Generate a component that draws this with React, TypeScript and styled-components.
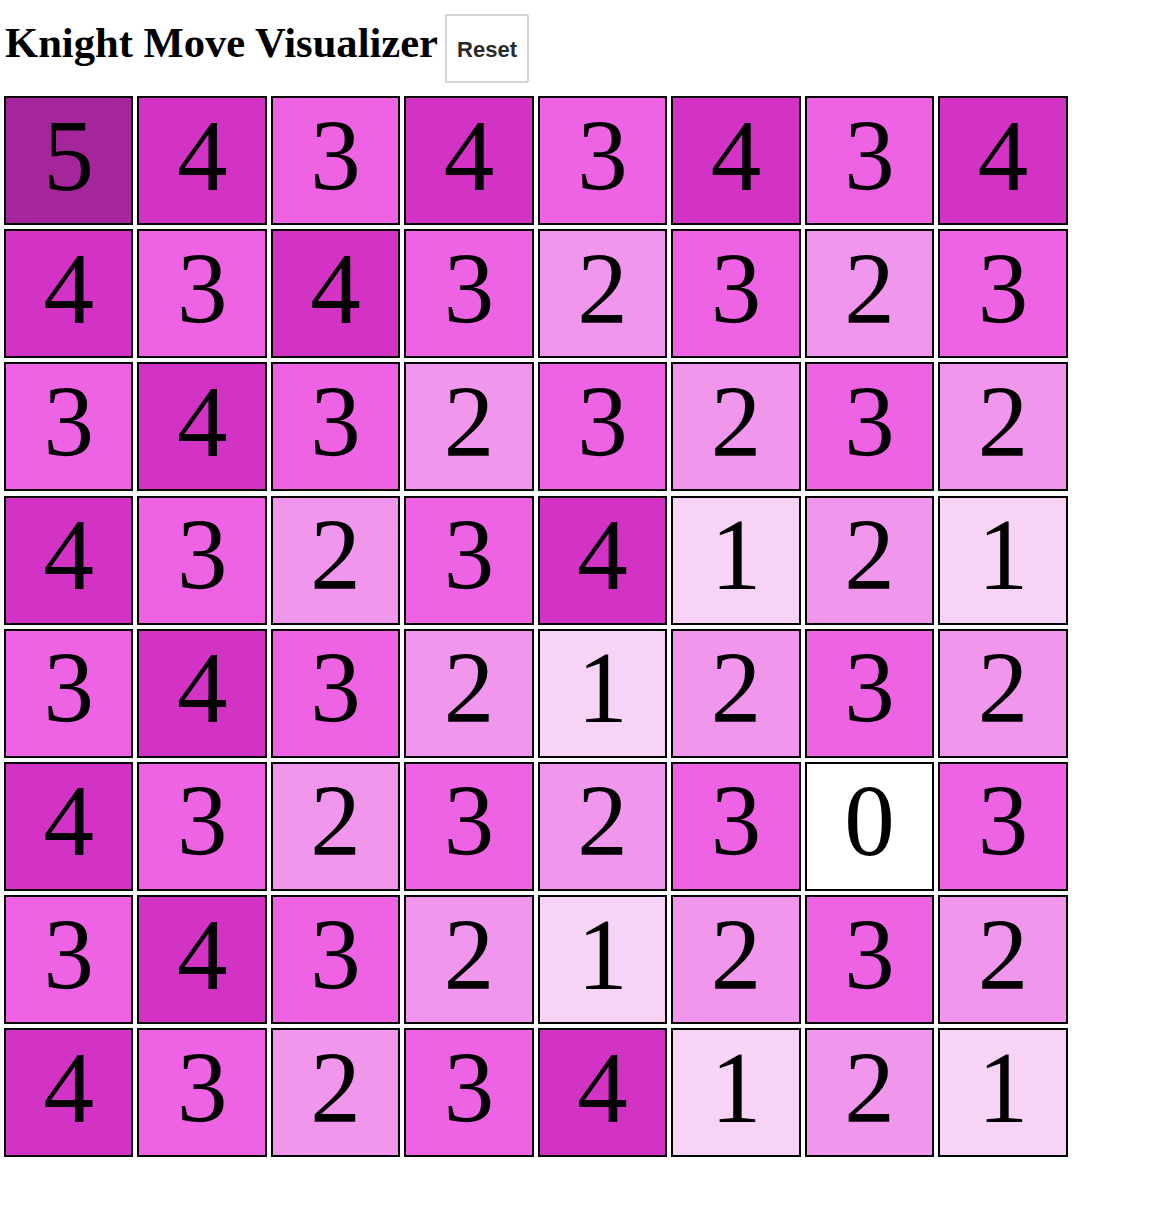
import React from "react";
import styled, { createGlobalStyle } from "styled-components";

const GlobalStyle = createGlobalStyle`
  html, body { margin: 0; padding: 0; background: #ffffff; }
  body { font-family: "Liberation Serif", "Times New Roman", serif; color: #000; }
`;

const Page = styled.div`
  padding: 14px 4px 40px 4px;
`;

const Header = styled.div`
  display: flex;
  align-items: center;
  gap: 7px;
  margin-bottom: 13px;
`;

const Title = styled.h1`
  margin: 0;
  font-family: "Liberation Serif", "Times New Roman", serif;
  font-weight: 700;
  font-size: 42.6px;
  line-height: 48px;
  padding-left: 1px;
  padding-bottom: 12px;
`;

const ResetButton = styled.button`
  height: 69px;
  width: 84px;
  box-sizing: border-box;
  background: #ffffff;
  border: 2px solid #d4d4d4;
  border-radius: 2px;
  font-family: "Liberation Sans", Arial, sans-serif;
  font-weight: 700;
  font-size: 22px;
  color: #2a2a2a;
  padding: 3px 0 0 0;
  cursor: pointer;
`;

const Board = styled.div`
  display: grid;
  grid-template-columns: repeat(8, 129.3px);
  grid-auto-rows: 129px;
  gap: 4.2px;
`;

const shades: Record<number, string> = {
  0: "#ffffff",
  1: "#f7d4f6",
  2: "#f096ec",
  3: "#ee62e4",
  4: "#d233c5",
  5: "#a5259a",
};

const Cell = styled.div<{ $d: number }>`
  box-sizing: border-box;
  border: 2px solid #000;
  background: ${(p) => shades[p.$d] ?? "#ffffff"};
  display: flex;
  align-items: center;
  justify-content: center;
  font-family: "Liberation Serif", "Times New Roman", serif;
  font-size: 101px;
  line-height: 1;
  padding-bottom: 9px;
`;

const distances: number[][] = [
  [5, 4, 3, 4, 3, 4, 3, 4],
  [4, 3, 4, 3, 2, 3, 2, 3],
  [3, 4, 3, 2, 3, 2, 3, 2],
  [4, 3, 2, 3, 4, 1, 2, 1],
  [3, 4, 3, 2, 1, 2, 3, 2],
  [4, 3, 2, 3, 2, 3, 0, 3],
  [3, 4, 3, 2, 1, 2, 3, 2],
  [4, 3, 2, 3, 4, 1, 2, 1],
];

export default function App() {
  return (
    <>
      <GlobalStyle />
      <Page>
        <Header>
          <Title>Knight Move Visualizer</Title>
          <ResetButton>Reset</ResetButton>
        </Header>
        <Board>
          {distances.flatMap((row, r) =>
            row.map((d, c) => (
              <Cell key={`${r}-${c}`} $d={d}>
                {d}
              </Cell>
            ))
          )}
        </Board>
      </Page>
    </>
  );
}
